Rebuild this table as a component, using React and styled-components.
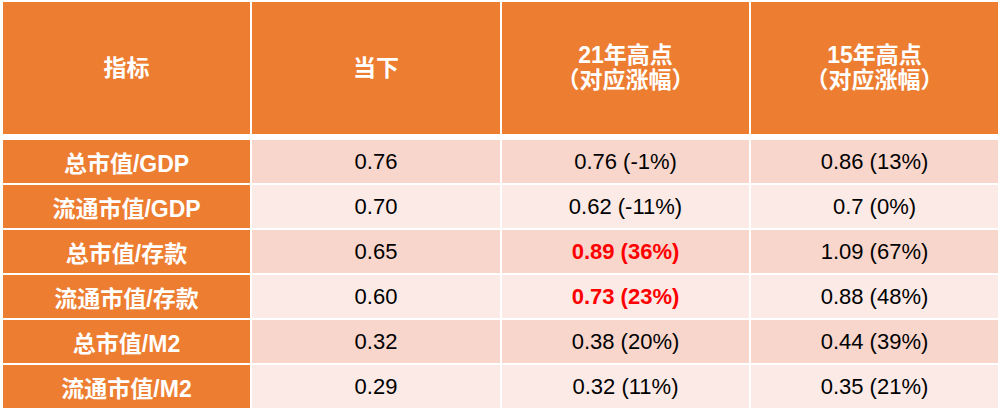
import React from 'react';
import styled, { createGlobalStyle } from 'styled-components';

const GlobalStyle = createGlobalStyle`
	html, body {
		margin: 0;
		padding: 0;
		background: #ffffff;
	}
	body {
		font-family: 'Liberation Sans', Arial, 'Noto Sans CJK SC', sans-serif;
	}
`;

const ORANGE = '#ED7D31';

const rows = [
	{ name: '总市值/GDP', now: '0.76', h21: '0.76 (-1%)', h15: '0.86 (13%)' },
	{ name: '流通市值/GDP', now: '0.70', h21: '0.62 (-11%)', h15: '0.7 (0%)' },
	{ name: '总市值/存款', now: '0.65', h21: '0.89 (36%)', h15: '1.09 (67%)', hot: true },
	{ name: '流通市值/存款', now: '0.60', h21: '0.73 (23%)', h15: '0.88 (48%)', hot: true },
	{ name: '总市值/M2', now: '0.32', h21: '0.38 (20%)', h15: '0.44 (39%)' },
	{ name: '流通市值/M2', now: '0.29', h21: '0.32 (11%)', h15: '0.35 (21%)' }
];

export default function App() {
	return (
		<Page>
			<GlobalStyle />
			<Table>
				<HeadRow>
					<HeadCell>指标</HeadCell>
					<HeadCell>当下</HeadCell>
					<HeadCell>
						<span>21年高点</span>
						<span>（对应涨幅）</span>
					</HeadCell>
					<HeadCell>
						<span>15年高点</span>
						<span>（对应涨幅）</span>
					</HeadCell>
				</HeadRow>
				<Body>
					{rows.map((row, i) => (
						<Row key={row.name}>
							<LabelCell>{row.name}</LabelCell>
							<Cell $odd={i % 2 === 0}>{row.now}</Cell>
							<Cell $odd={i % 2 === 0} $hot={row.hot}>
								{row.h21}
							</Cell>
							<Cell $odd={i % 2 === 0}>{row.h15}</Cell>
						</Row>
					))}
				</Body>
			</Table>
		</Page>
	);
}

const Page = styled.div`
	padding: 2px 0 0 3px;
	width: 1004px;
	box-sizing: border-box;
`;

const Table = styled.div`
	display: flex;
	flex-direction: column;
	gap: 6px;
	width: 995px;
`;

const HeadRow = styled.div`
	display: grid;
	grid-template-columns: 247px 248px 247px 247px;
	column-gap: 2px;
	height: 132px;
`;

const HeadCell = styled.div`
	background: ${ORANGE};
	color: #ffffff;
	font-weight: bold;
	font-size: 23px;
	line-height: 25px;
	display: flex;
	flex-direction: column;
	align-items: center;
	justify-content: center;
`;

const Body = styled.div`
	display: flex;
	flex-direction: column;
	gap: 2px;
`;

const Row = styled.div`
	display: grid;
	grid-template-columns: 247px 248px 247px 247px;
	column-gap: 2px;
	height: 43px;
`;

const Cell = styled.div`
	background: ${(p) => (p.$odd ? '#F8D6CC' : '#FBEAE6')};
	color: ${(p) => (p.$hot ? '#FF0000' : '#000000')};
	font-weight: ${(p) => (p.$hot ? 'bold' : 'normal')};
	font-size: 22px;
	display: flex;
	align-items: center;
	justify-content: center;
`;

const LabelCell = styled(Cell)`
	background: ${ORANGE};
	color: #ffffff;
	font-weight: bold;
	font-size: 23px;
`;
